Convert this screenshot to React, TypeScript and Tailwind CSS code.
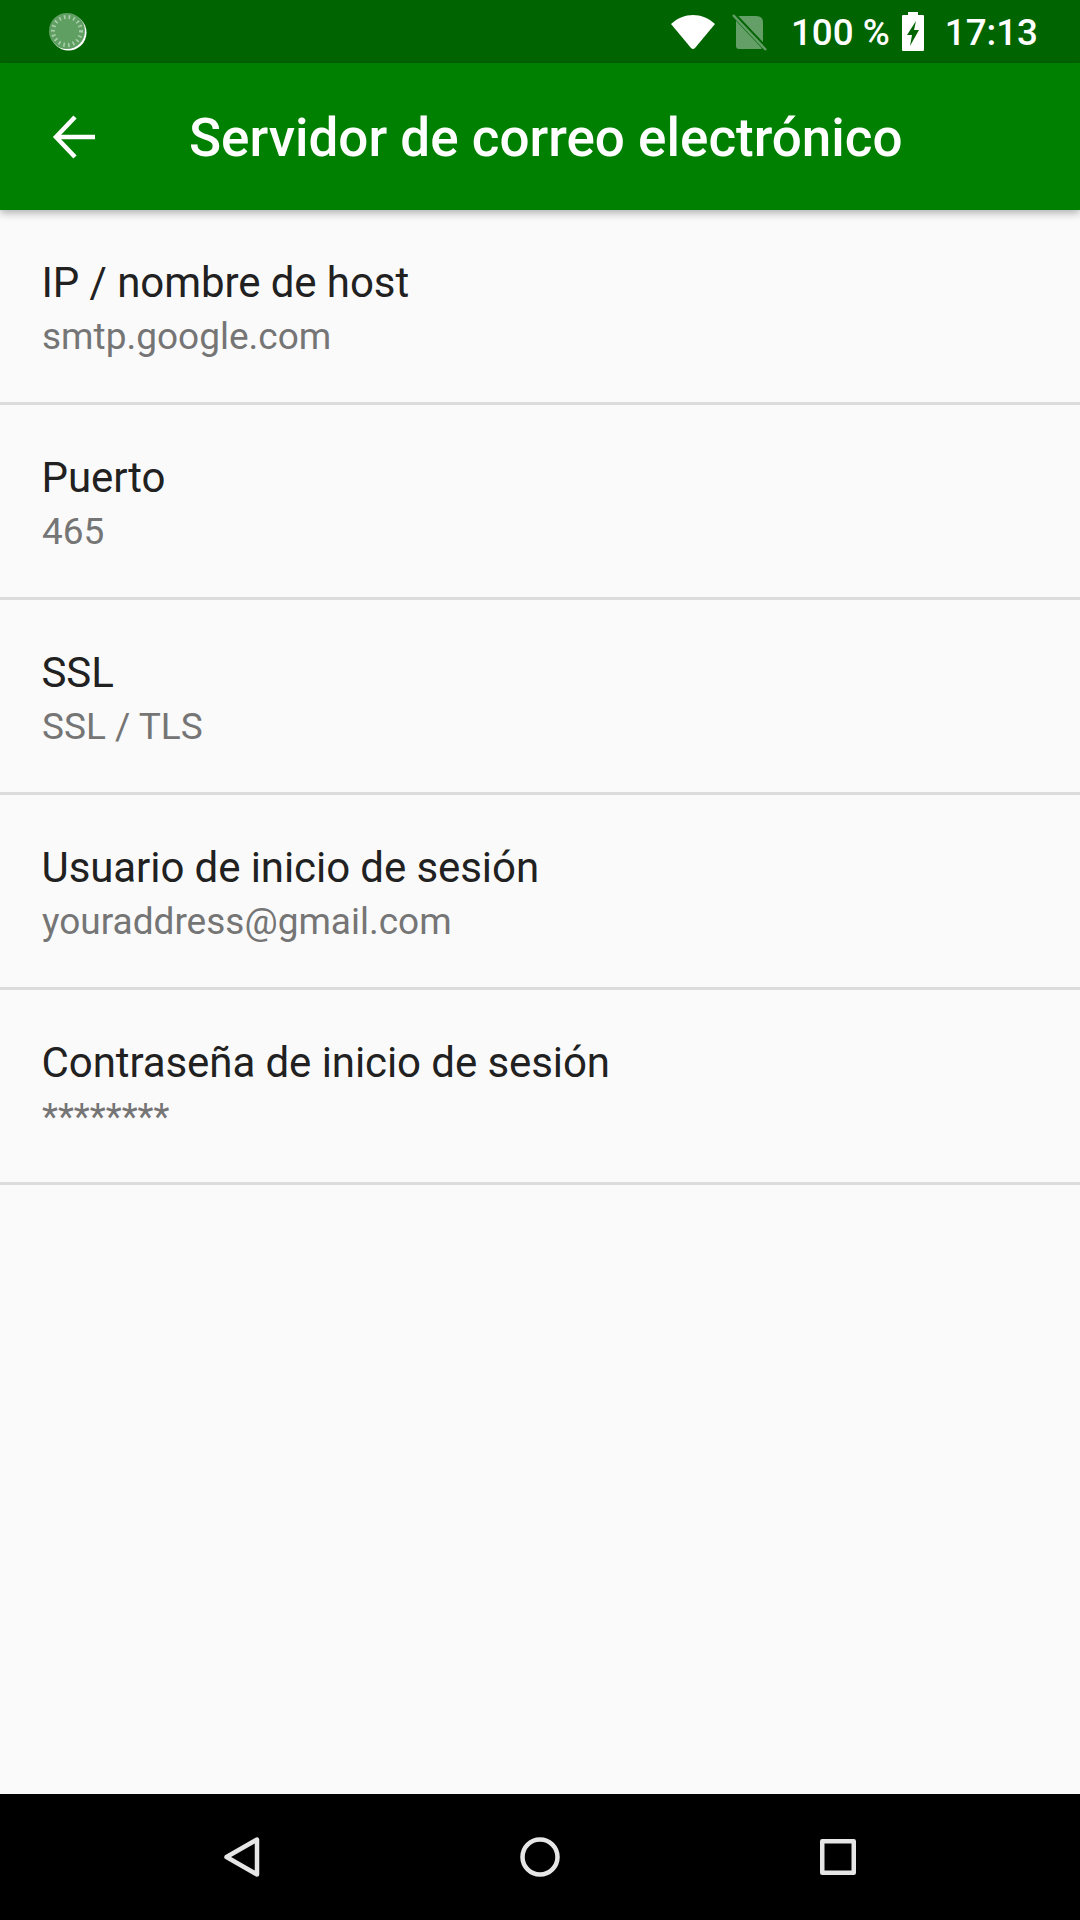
const font = { fontFamily: "Roboto, sans-serif" };

const rows = [
  ["IP / nombre de host", "smtp.google.com"],
  ["Puerto", "465"],
  ["SSL", "SSL / TLS"],
  ["Usuario de inicio de sesión", "youraddress@gmail.com"],
  ["Contraseña de inicio de sesión", "********"],
];

function Row({ title, value }: { title: string; value: string }) {
  return (
    <div className="h-[195px] border-b-[3px] border-[#dcdcdc] pl-[42px] pt-[45px]">
      <div className="text-[42px] leading-[56px] tracking-[-0.08px] text-[#212121] whitespace-nowrap -ml-[0.5px]">{title}</div>
      <div className="text-[37px] leading-[51px] text-[#757575] whitespace-nowrap">{value}</div>
    </div>
  );
}

export default function App() {
  return (
    <div className="w-[1080px] h-[1920px] flex flex-col bg-[#fafafa] overflow-hidden" style={font}>
      <div className="h-[63px] shrink-0 bg-[#006400] flex items-center text-white">
        <svg width="38" height="38" viewBox="0 0 38 38" className="ml-[49px]">
          <circle cx="19.5" cy="19.5" r="18" fill="#fff" />
          <circle cx="18" cy="18" r="18" fill="#5f9f62" />
          <circle cx="18" cy="18" r="14" fill="none" stroke="#a9cdaa" strokeWidth="4" strokeDasharray="1.6 3.2" />
        </svg>
        <div className="ml-auto flex items-center mr-[42px]">
          <svg width="46" height="37" viewBox="0 0 46 37">
            <path d="M1 11 C14 -1 32 -1 45 11 L25 35 Q23 37 21 35 Z" fill="#fff" />
          </svg>
          <svg width="35" height="38" viewBox="0 0 35 38" className="ml-[16px]">
            <path d="M4 3 H24 Q31 3 31 9 V33 Q31 36 28 36 H7 Q4 36 4 33 Z" fill="#649f67" />
            <path d="M1 1 L34 36" stroke="#006400" strokeWidth="5" />
            <path d="M1 2 L34 37" stroke="#649f67" strokeWidth="2.5" />
          </svg>
          <span className="ml-[24px] text-[36.75px] font-medium leading-none pt-[4px]">100 %</span>
          <svg width="24" height="40" viewBox="0 0 24 40" className="ml-[11px]">
            <path fillRule="evenodd" d="M7 0 H17 V3 H22 Q23 3 23 4 V38 Q23 39 22 39 H2 Q1 39 1 38 V4 Q1 3 2 3 H7 Z M15 9 L6 23 H11 L9 34 L18 18 H13 Z" fill="#fff" />
          </svg>
          <span className="ml-[20px] text-[36.75px] font-medium leading-none pt-[4px]">17:13</span>
        </div>
      </div>
      <div className="relative h-[147px] shrink-0 bg-[#008000] flex items-center text-white shadow-[0_3px_8px_rgba(0,0,0,0.3)]">
        <svg width="44" height="44" viewBox="0 0 44 44" className="ml-[52px]" fill="none" stroke="#fff" strokeWidth="4.5">
          <path d="M43 22 H4" />
          <path d="M23 2 L4 22 L23 42" />
        </svg>
        <span className="ml-[93px] text-[53px] font-medium leading-none pt-[4px] whitespace-nowrap">Servidor de correo electrónico</span>
      </div>
      <div className="flex-1">
        {rows.map(([t, v]) => (
          <Row key={t} title={t} value={v} />
        ))}
      </div>
      <div className="h-[126px] shrink-0 bg-black flex items-center">
        <svg width="36" height="40" viewBox="0 0 36 40" className="ml-[224px]" fill="none" stroke="#e6e6e6" strokeWidth="4.5" strokeLinejoin="round">
          <path d="M33 2.5 V37.5 L2.5 20 Z" />
        </svg>
        <svg width="40" height="40" viewBox="0 0 40 40" className="ml-[260px]" fill="none" stroke="#e6e6e6" strokeWidth="4.5">
          <circle cx="20" cy="20" r="17.5" />
        </svg>
        <svg width="36" height="36" viewBox="0 0 36 36" className="ml-[260px]" fill="none" stroke="#e6e6e6" strokeWidth="4.5" strokeLinejoin="round">
          <rect x="2.25" y="2.25" width="31.5" height="31.5" />
        </svg>
      </div>
    </div>
  );
}
